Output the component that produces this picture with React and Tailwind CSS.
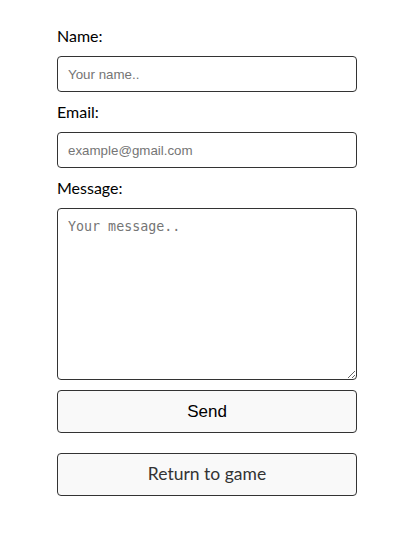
export default function App() {
  return (
    <div className="min-h-[547px] bg-white font-['Lato',sans-serif] text-black">
      <form className="ml-[57px] flex w-[300px] flex-col pt-[24px]" onSubmit={(e) => e.preventDefault()}>
        <label className="mb-2 block text-[16px] leading-[24px]">Name:</label>
        <input
          type="text"
          placeholder="Your name.."
          className="mb-2 h-[36px] w-full rounded-[4px] border border-[#333] bg-white px-[10px] font-['Liberation_Sans',Arial,sans-serif] text-[13.33px] text-black outline-none placeholder:text-[#757575]"
        />
        <label className="mb-2 block text-[16px] leading-[24px]">Email:</label>
        <input
          type="email"
          placeholder="example@gmail.com"
          className="mb-2 h-[36px] w-full rounded-[4px] border border-[#333] bg-white px-[10px] font-['Liberation_Sans',Arial,sans-serif] text-[13.33px] text-black outline-none placeholder:text-[#757575]"
        />
        <label className="mb-2 block text-[16px] leading-[24px]">Message:</label>
        <textarea
          placeholder="Your message.."
          className="block h-[172px] w-full rounded-[4px] border border-[#333] bg-white px-[10px] pt-[10px] pb-[8px] font-['DejaVu_Sans_Mono',monospace] text-[13.33px] leading-[16px] text-black outline-none placeholder:text-[#757575]"
        />
        <button
          type="submit"
          className="mt-[10px] h-[43px] w-full rounded-[4px] border border-[#333] bg-[#f9f9f9] font-['Liberation_Sans',Arial,sans-serif] text-[17px] text-black"
        >
          Send
        </button>
        <button
          type="button"
          className="mt-[20px] h-[43px] w-full rounded-[4px] border border-[#333] bg-[#f9f9f9] font-['Lato',sans-serif] text-[17.5px] text-[#333]"
        >
          Return to game
        </button>
      </form>
    </div>
  );
}
